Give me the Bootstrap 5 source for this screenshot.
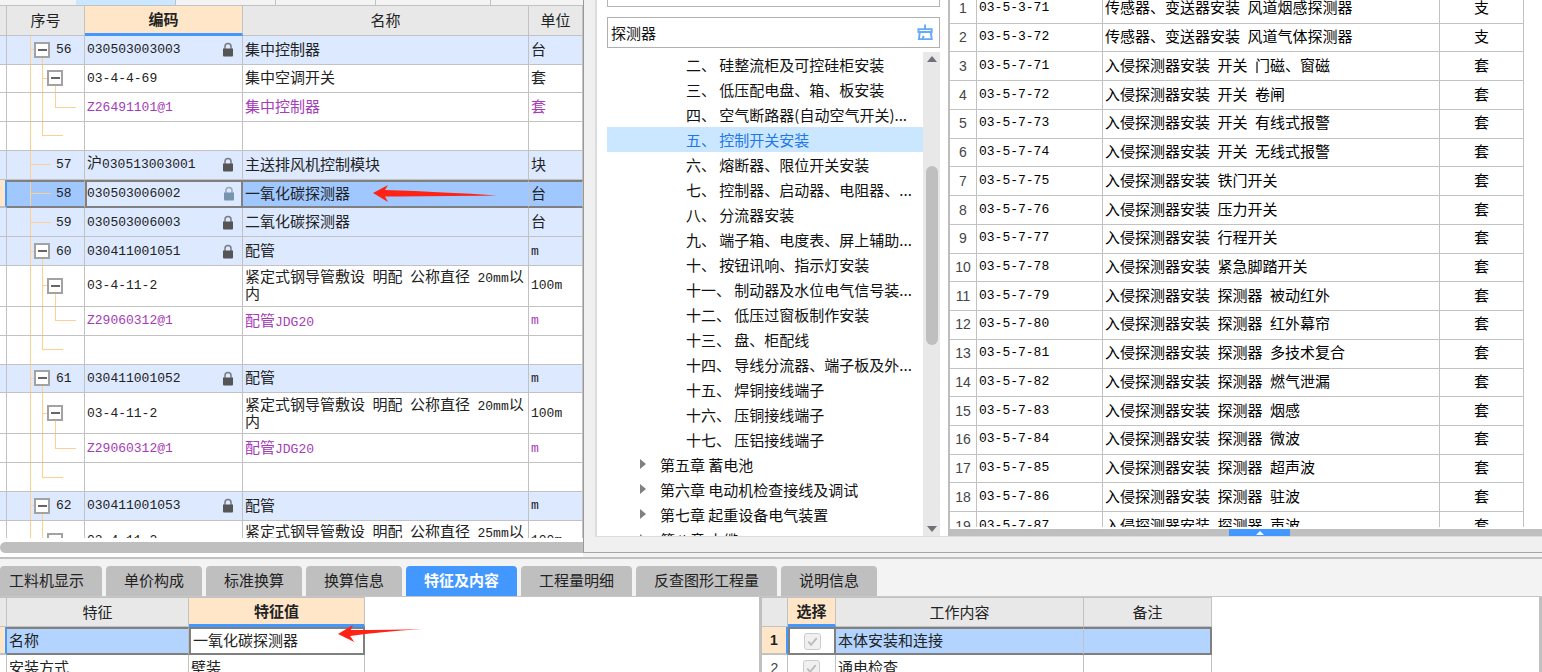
<!DOCTYPE html>
<html lang="zh-CN">
<head>
<meta charset="utf-8">
<meta name="viewport" content="width=device-width, initial-scale=1">
<title>工程量清单</title>
<link rel="stylesheet" href="https://cdn.jsdelivr.net/npm/bootstrap@5.3.0/dist/css/bootstrap.min.css">
<style>
:root{--line:#c2c2c2;--accent:#4398ff;--row:#dce9fe;--head:#e8e8e8;--edit:#ffe6c9;--tree:#ffcf8f}
body{font-family:"Noto Sans CJK SC",sans-serif;font-size:15px;line-height:17px;color:#222;background:#f3f3f3}
.mono{font-family:"Liberation Mono",monospace;font-size:13px}
td>span.mono{line-height:1px}
.upper{min-height:0}
.bill{flex:0 0 583px;background:#fff}
.strip{height:5px;background:#f3f3f3;padding-left:76px}
.strip i{border-right:1px solid var(--line);width:100px}
.strip i:first-child{background:#cbe7ff}
.strip i:last-child{width:115px}
.clip{min-height:0;overflow:hidden}

/* grids */
.table.gridt{table-layout:fixed;border-collapse:separate;border-spacing:0;color:inherit;margin:0}
.table.gridt>*>*>*{padding:0 2px;border:solid var(--line);border-width:0 1px 1px 0;vertical-align:middle;background:#fff;font-weight:400;color:inherit}
.table.gridt>thead>tr>th{background:var(--head);text-align:center;border-top:1px solid var(--line);padding-bottom:2px}
.table.gridt>thead>tr>th.editing{background:var(--edit);font-weight:700;border-bottom:3px solid var(--accent)}
.gridt tbody tr{height:28px}
.gridt tbody tr.tall{height:40px}
.gridt tr.item>td{background-color:var(--row)}
.gridt tr.aux>td{color:#a63cb8}
.bill .gridt{height:557px}
.bill .gridt thead tr{height:31px}
.bill .gridt tbody td:nth-child(n+4):not(.mono){padding-bottom:3px}
.gridt tr.chosen>td{background-color:#a0c8ff;border-top:2px solid #808080;border-bottom:2px solid #808080}
.gridt tr.chosen>td.cur{background-color:var(--row);border-left:2px solid #808080;border-right:2px solid #808080}
.gridt tr.chosen>td:first-child{background:var(--edit);border-color:var(--line);border-right:2px solid var(--accent);border-top:0}
.bill .gridt td:nth-child(2){padding:0}

/* outline lines of the sequence column */
.seq{--g:linear-gradient(var(--tree),var(--tree));background-repeat:no-repeat!important}
.leaf{background-image:var(--g),var(--g)!important;background-size:1px 100%,21px 1px!important;background-position:23px 0,23px 50%!important}
.parent{background-image:var(--g),var(--g),var(--g)!important;background-size:1px 100%,6px 1px,1px 50%!important;background-position:23px 0,23px 50%,35px 100%!important}
.child{background-image:var(--g),var(--g),var(--g),var(--g)!important;background-size:1px 100%,1px 100%,6px 1px,1px 50%!important;background-position:23px 0,35px 0,35px 50%,48px 100%!important}
.grand{background-image:var(--g),var(--g),var(--g),var(--g)!important;background-size:1px 100%,1px 100%,1px 50%,21px 1px!important;background-position:23px 0,35px 0,48px 0,48px 50%!important}
.last{background-image:var(--g),var(--g),var(--g)!important;background-size:1px 100%,1px 50%,21px 1px!important;background-position:23px 0,35px 0,35px 50%!important}
.leaf>span.mono{display:block;padding-left:49px;line-height:17px}
.parent>div{padding-left:27px;gap:6px}
.child>div{padding-left:40px}
.fold{width:16px;height:16px;border:2px solid #a2a2a2;background:#fff}
.fold::before{content:"";width:9px;height:2px;background:#666}
.lock{width:12px;height:15px;margin-right:6px;color:#555}
.chosen .lock{color:#7893ad}
.hbar{height:12px;margin:4px 0 4px;background:#bfbfbf;border-radius:6px 0 0 6px}

/* lookup window */
.lookup{background:#f0f0f0;border-left:1px solid #999;border-bottom:1px solid #a5a5a5;padding:0 0 15px 11px;margin-bottom:4px;min-width:0}
.lookup-in{background:#fff;border:solid #dcdcdc;border-width:0 0 1px 2px;min-height:0}
.finder{flex:0 0 353px;padding:0 8px 0 10px;border-right:2px solid #bdbdbd}
.prevbox{height:7px;border:solid #b4b4b4;border-width:0 1px 1px;margin-bottom:10px}
.search{height:32px;border:1px solid #b0b0b0;margin-bottom:4px;padding-right:6px}
.search input{font-size:15px;line-height:17px;padding:0 3px;border:0;background:none;color:#111}
.search svg{width:17px;height:18px}
.twig{height:25px;line-height:25px;padding-left:79px;color:#111;white-space:pre;text-decoration:none}
.twig.on{background:#cbe7ff;color:#2277e8}
.twig.chap{padding-left:33px}
.twig.chap::before{content:"";border:solid transparent;border-width:5px 0 5px 6px;border-left-color:#808080;margin-right:14px}
.vbar{width:17px;background:#e8e8e8;padding:4px 2px}
.vbar b{width:12px;height:179px;margin-top:104px;border-radius:6px;background:#bfbfbf}
.up,.down{border:solid transparent;border-width:0 5px 6px;border-bottom-color:#70707a}
.down{border-width:6px 5px 0;border-top-color:#70707a}
.quota .gridt{height:546px;margin-top:-5px;color:#000;width:calc(100% - 18px)}
.quota .gridt tbody td:nth-child(n+3){padding-bottom:4px}
.quota .gridt tbody td.mono{padding-bottom:2px}
.quota td:last-child{text-align:center}
.gridt td.num{color:#444;font-family:"Liberation Sans",sans-serif;font-size:14px;text-align:center}
.grip{height:7px;background:#bfbfbf;margin-top:2px;padding-left:279px}
.grip button{width:61px;background:var(--accent);border:0;padding:0}
.grip button::before{content:"";border:solid transparent;border-width:0 4px 4px;border-bottom-color:#fff}

/* lower part */
.lower{height:115px;border-top:2px solid #c0c0c0;padding-top:7px}
.tabs{gap:4px;border-bottom:1px solid #c6c6c6;height:31px}
.tabs .nav-link{background:#bfbfbf;color:#222;border:0;border-radius:4px 4px 0 0;padding:0 18px 2px;font-size:15px;line-height:28px}
.tabs .nav-link:first-child{padding-left:9px}
.tabs .nav-link.active{background:var(--accent);color:#fff;font-weight:700}
.feat{flex:0 0 759px;background:#fff}
.feat .gridt{width:365px}
.work{border-left:3px solid #c0c0c0;border-right:3px solid #c0c0c0;background:#fff;min-width:0}
.work .gridt{width:450px}
.lower .gridt thead tr{height:30px}
.lower .gridt tbody td:not(.num){padding-bottom:4px}
.lower .gridt tr.chosen>td{background:#b2d4ff;border-top:2px solid #808080}
.lower .gridt tr.chosen>td:first-child{background:var(--edit);border-top:0;color:#222;font-weight:700}
.lower .gridt tr.chosen>td.cur{background:#fff}
.lower .gridt tr.chosen>td:last-child{border-right:2px solid #808080}
.lower .gridt tbody td.pick{padding-bottom:0}
.form-check-input.tick{display:block;width:17px;height:17px;margin:0 auto;float:none;border:1px solid #ccc;border-radius:3px;background:#f0f0f0 url("data:image/svg+xml,%3Csvg xmlns='http://www.w3.org/2000/svg' viewBox='0 0 16 16'%3E%3Cpath d='M3.5 8l3 3.5 6-7' fill='none' stroke='%23bbb' stroke-width='2'/%3E%3C/svg%3E") center/contain no-repeat;opacity:1!important}
.arrow{position:absolute;pointer-events:none;width:124px;height:20px;fill:#ff2315}
.bill .arrow{left:373px;top:184px}
.feat .arrow{left:338px;top:27px;width:84px}
</style>
</head>
<body class="vh-100 overflow-hidden d-flex flex-column">
<svg class="d-none"><symbol id="lock" viewBox="0 0 12 15"><path d="M3 7V4.500a3 3 0 0 1 6 0V7" fill="none" stroke="currentColor" stroke-width="1.500" opacity=".75"/><path d="M1 6.500h10v7q0 1-1 1H2q-1 0-1-1z" fill="currentColor"/></symbol></svg>

<main class="upper d-flex flex-fill">
  <section class="bill d-flex flex-column position-relative">
    <div class="strip d-flex"><i></i><i></i><i></i><i></i></div>
    <div class="clip flex-fill">
      <table class="table gridt">
        <colgroup><col style="width:7px"><col style="width:78px"><col style="width:158px"><col><col style="width:54px"></colgroup>
        <thead><tr><th></th><th>序号</th><th class="editing">编码</th><th>名称</th><th>单位</th></tr></thead>
        <tbody>
        <tr class="item"><td></td><td class="seq parent"><div class="d-flex align-items-center"><button class="fold d-flex align-items-center justify-content-center p-0" aria-label="折叠"></button><span class="mono">56</span></div></td><td><div class="d-flex align-items-center justify-content-between"><span class="mono">030503003003</span><svg class="lock"><use href="#lock"/></svg></div></td><td>集中控制器</td><td>台</td></tr>
        <tr><td></td><td class="seq child"><div class="d-flex"><button class="fold d-flex align-items-center justify-content-center p-0" aria-label="折叠"></button></div></td><td class="mono">03-4-4-69</td><td>集中空调开关</td><td>套</td></tr>
        <tr class="aux"><td></td><td class="seq grand"></td><td class="mono">Z26491101@1</td><td>集中控制器</td><td>套</td></tr>
        <tr><td></td><td class="seq last"></td><td></td><td></td><td></td></tr>
        <tr class="item"><td></td><td class="seq leaf"><span class="mono">57</span></td><td><div class="d-flex align-items-center justify-content-between"><span class="pb-1">沪<span class="mono">030513003001</span></span><svg class="lock"><use href="#lock"/></svg></div></td><td>主送排风机控制模块</td><td>块</td></tr>
        <tr class="item chosen"><td></td><td class="seq leaf"><span class="mono">58</span></td><td class="cur p-0"><div class="d-flex align-items-center justify-content-between"><span class="mono">030503006002</span><svg class="lock"><use href="#lock"/></svg></div></td><td>一氧化碳探测器</td><td>台</td></tr>
        <tr class="item"><td></td><td class="seq leaf"><span class="mono">59</span></td><td><div class="d-flex align-items-center justify-content-between"><span class="mono">030503006003</span><svg class="lock"><use href="#lock"/></svg></div></td><td>二氧化碳探测器</td><td>台</td></tr>
        <tr class="item"><td></td><td class="seq parent"><div class="d-flex align-items-center"><button class="fold d-flex align-items-center justify-content-center p-0" aria-label="折叠"></button><span class="mono">60</span></div></td><td><div class="d-flex align-items-center justify-content-between"><span class="mono">030411001051</span><svg class="lock"><use href="#lock"/></svg></div></td><td>配管</td><td class="mono">m</td></tr>
        <tr class="tall"><td></td><td class="seq child"><div class="d-flex"><button class="fold d-flex align-items-center justify-content-center p-0" aria-label="折叠"></button></div></td><td class="mono">03-4-11-2</td><td>紧定式钢导管敷设&ensp;明配&ensp;公称直径&ensp;<span class="mono">20mm</span>以内</td><td class="mono">100m</td></tr>
        <tr class="aux"><td></td><td class="seq grand"></td><td class="mono">Z29060312@1</td><td>配管<span class="mono">JDG20</span></td><td class="mono">m</td></tr>
        <tr><td></td><td class="seq last"></td><td></td><td></td><td></td></tr>
        <tr class="item"><td></td><td class="seq parent"><div class="d-flex align-items-center"><button class="fold d-flex align-items-center justify-content-center p-0" aria-label="折叠"></button><span class="mono">61</span></div></td><td><div class="d-flex align-items-center justify-content-between"><span class="mono">030411001052</span><svg class="lock"><use href="#lock"/></svg></div></td><td>配管</td><td class="mono">m</td></tr>
        <tr class="tall"><td></td><td class="seq child"><div class="d-flex"><button class="fold d-flex align-items-center justify-content-center p-0" aria-label="折叠"></button></div></td><td class="mono">03-4-11-2</td><td>紧定式钢导管敷设&ensp;明配&ensp;公称直径&ensp;<span class="mono">20mm</span>以内</td><td class="mono">100m</td></tr>
        <tr class="aux"><td></td><td class="seq grand"></td><td class="mono">Z29060312@1</td><td>配管<span class="mono">JDG20</span></td><td class="mono">m</td></tr>
        <tr><td></td><td class="seq last"></td><td></td><td></td><td></td></tr>
        <tr class="item"><td></td><td class="seq parent"><div class="d-flex align-items-center"><button class="fold d-flex align-items-center justify-content-center p-0" aria-label="折叠"></button><span class="mono">62</span></div></td><td><div class="d-flex align-items-center justify-content-between"><span class="mono">030411001053</span><svg class="lock"><use href="#lock"/></svg></div></td><td>配管</td><td class="mono">m</td></tr>
        <tr class="tall"><td></td><td class="seq child"><div class="d-flex"><button class="fold d-flex align-items-center justify-content-center p-0" aria-label="折叠"></button></div></td><td class="mono">03-4-11-2</td><td>紧定式钢导管敷设&ensp;明配&ensp;公称直径&ensp;<span class="mono">25mm</span>以内</td><td class="mono">100m</td></tr>
        </tbody>
      </table>
    </div>
    <div class="hbar"></div>
    <svg class="arrow" viewBox="0 0 124 20" preserveAspectRatio="none"><path d="M0 9L15 1l-3 5q60 2 112 5.500Q60 12 12 12.500l3 5.500z"/></svg>
  </section>

  <section class="lookup d-flex flex-fill">
    <div class="lookup-in d-flex flex-fill">
      <div class="finder d-flex flex-column">
        <div class="prevbox"></div>
        <div class="search d-flex align-items-center">
          <input class="form-control shadow-none" type="text" value="探测器" aria-label="查询">
          <svg viewBox="0 0 17 18" fill="none" stroke="#66a9fb" stroke-width="2"><path d="M8.500 1v5M1.500 9V6h14v3zM3 9l-1 7.500h13.500L14.500 9M6 16l1-3"/></svg>
        </div>
        <div class="clip d-flex flex-fill">
          <nav class="flex-fill clip">
            <a href="#" class="twig d-block">二、 硅整流柜及可控硅柜安装</a>
            <a href="#" class="twig d-block">三、 低压配电盘、箱、板安装</a>
            <a href="#" class="twig d-block">四、 空气断路器(自动空气开关)...</a>
            <a href="#" class="twig d-block on">五、 控制开关安装</a>
            <a href="#" class="twig d-block">六、 熔断器、限位开关安装</a>
            <a href="#" class="twig d-block">七、 控制器、启动器、电阻器、...</a>
            <a href="#" class="twig d-block">八、 分流器安装</a>
            <a href="#" class="twig d-block">九、 端子箱、电度表、屏上辅助...</a>
            <a href="#" class="twig d-block">十、 按钮讯响、指示灯安装</a>
            <a href="#" class="twig d-block">十一、 制动器及水位电气信号装...</a>
            <a href="#" class="twig d-block">十二、 低压过窗板制作安装</a>
            <a href="#" class="twig d-block">十三、 盘、柜配线</a>
            <a href="#" class="twig d-block">十四、 导线分流器、端子板及外...</a>
            <a href="#" class="twig d-block">十五、 焊铜接线端子</a>
            <a href="#" class="twig d-block">十六、 压铜接线端子</a>
            <a href="#" class="twig d-block">十七、 压铝接线端子</a>
            <a href="#" class="twig d-flex align-items-center chap">第五章 蓄电池</a>
            <a href="#" class="twig d-flex align-items-center chap">第六章 电动机检查接线及调试</a>
            <a href="#" class="twig d-flex align-items-center chap">第七章 起重设备电气装置</a>
            <a href="#" class="twig d-flex align-items-center chap">第八章 电缆</a>
          </nav>
          <div class="vbar d-flex flex-column align-items-center"><i class="up"></i><b></b><i class="down mt-auto"></i></div>
        </div>
      </div>
      <div class="quota d-flex flex-column flex-fill">
        <div class="clip flex-fill">
          <table class="table gridt">
            <colgroup><col style="width:27px"><col style="width:126px"><col><col style="width:84px"></colgroup>
            <tbody>
            <tr><td class="num">1</td><td class="mono">03-5-3-71</td><td>传感器、变送器安装&ensp;风道烟感探测器</td><td>支</td></tr>
            <tr><td class="num">2</td><td class="mono">03-5-3-72</td><td>传感器、变送器安装&ensp;风道气体探测器</td><td>支</td></tr>
            <tr><td class="num">3</td><td class="mono">03-5-7-71</td><td>入侵探测器安装&ensp;开关&ensp;门磁、窗磁</td><td>套</td></tr>
            <tr><td class="num">4</td><td class="mono">03-5-7-72</td><td>入侵探测器安装&ensp;开关&ensp;卷闸</td><td>套</td></tr>
            <tr><td class="num">5</td><td class="mono">03-5-7-73</td><td>入侵探测器安装&ensp;开关&ensp;有线式报警</td><td>套</td></tr>
            <tr><td class="num">6</td><td class="mono">03-5-7-74</td><td>入侵探测器安装&ensp;开关&ensp;无线式报警</td><td>套</td></tr>
            <tr><td class="num">7</td><td class="mono">03-5-7-75</td><td>入侵探测器安装&ensp;铁门开关</td><td>套</td></tr>
            <tr><td class="num">8</td><td class="mono">03-5-7-76</td><td>入侵探测器安装&ensp;压力开关</td><td>套</td></tr>
            <tr><td class="num">9</td><td class="mono">03-5-7-77</td><td>入侵探测器安装&ensp;行程开关</td><td>套</td></tr>
            <tr><td class="num">10</td><td class="mono">03-5-7-78</td><td>入侵探测器安装&ensp;紧急脚踏开关</td><td>套</td></tr>
            <tr><td class="num">11</td><td class="mono">03-5-7-79</td><td>入侵探测器安装&ensp;探测器&ensp;被动红外</td><td>套</td></tr>
            <tr><td class="num">12</td><td class="mono">03-5-7-80</td><td>入侵探测器安装&ensp;探测器&ensp;红外幕帘</td><td>套</td></tr>
            <tr><td class="num">13</td><td class="mono">03-5-7-81</td><td>入侵探测器安装&ensp;探测器&ensp;多技术复合</td><td>套</td></tr>
            <tr><td class="num">14</td><td class="mono">03-5-7-82</td><td>入侵探测器安装&ensp;探测器&ensp;燃气泄漏</td><td>套</td></tr>
            <tr><td class="num">15</td><td class="mono">03-5-7-83</td><td>入侵探测器安装&ensp;探测器&ensp;烟感</td><td>套</td></tr>
            <tr><td class="num">16</td><td class="mono">03-5-7-84</td><td>入侵探测器安装&ensp;探测器&ensp;微波</td><td>套</td></tr>
            <tr><td class="num">17</td><td class="mono">03-5-7-85</td><td>入侵探测器安装&ensp;探测器&ensp;超声波</td><td>套</td></tr>
            <tr><td class="num">18</td><td class="mono">03-5-7-86</td><td>入侵探测器安装&ensp;探测器&ensp;驻波</td><td>套</td></tr>
            <tr><td class="num">19</td><td class="mono">03-5-7-87</td><td>入侵探测器安装&ensp;探测器&ensp;声波</td><td>套</td></tr>
            </tbody>
          </table>
        </div>
        <div class="grip d-flex"><button class="d-flex align-items-center justify-content-center" aria-label="展开"></button></div>
      </div>
    </div>
  </section>
</main>

<section class="lower d-flex flex-column flex-shrink-0">
  <nav class="tabs nav flex-nowrap flex-shrink-0">
    <button class="nav-link">工料机显示</button>
    <button class="nav-link">单价构成</button>
    <button class="nav-link">标准换算</button>
    <button class="nav-link">换算信息</button>
    <button class="nav-link active">特征及内容</button>
    <button class="nav-link">工程量明细</button>
    <button class="nav-link">反查图形工程量</button>
    <button class="nav-link">说明信息</button>
  </nav>
  <div class="clip d-flex flex-fill">
    <div class="feat position-relative">
      <table class="table gridt">
        <colgroup><col style="width:7px"><col><col style="width:176px"></colgroup>
        <thead><tr><th></th><th>特征</th><th class="editing">特征值</th></tr></thead>
        <tbody>
        <tr class="chosen"><td></td><td>名称</td><td class="cur">一氧化碳探测器</td></tr>
        <tr><td></td><td>安装方式</td><td>壁装</td></tr>
        </tbody>
      </table>
      <svg class="arrow" viewBox="0 0 124 20" preserveAspectRatio="none"><path d="M0 10L22 1l-3 5q60 0 105-1Q60 8 18 12l6 6z"/></svg>
    </div>
    <div class="work flex-fill">
      <table class="table gridt">
        <colgroup><col style="width:26px"><col style="width:48px"><col><col style="width:128px"></colgroup>
        <thead><tr><th></th><th class="editing">选择</th><th>工作内容</th><th>备注</th></tr></thead>
        <tbody>
        <tr class="chosen"><td class="num">1</td><td class="cur pick"><input class="form-check-input tick" type="checkbox" checked disabled aria-label="选择 1"></td><td>本体安装和连接</td><td></td></tr>
        <tr><td class="num">2</td><td class="pick"><input class="form-check-input tick" type="checkbox" checked disabled aria-label="选择 2"></td><td>通电检查</td><td></td></tr>
        </tbody>
      </table>
    </div>
  </div>
</section>
<script src="https://cdn.jsdelivr.net/npm/bootstrap@5.3.0/dist/js/bootstrap.bundle.min.js"></script>
</body>
</html>
